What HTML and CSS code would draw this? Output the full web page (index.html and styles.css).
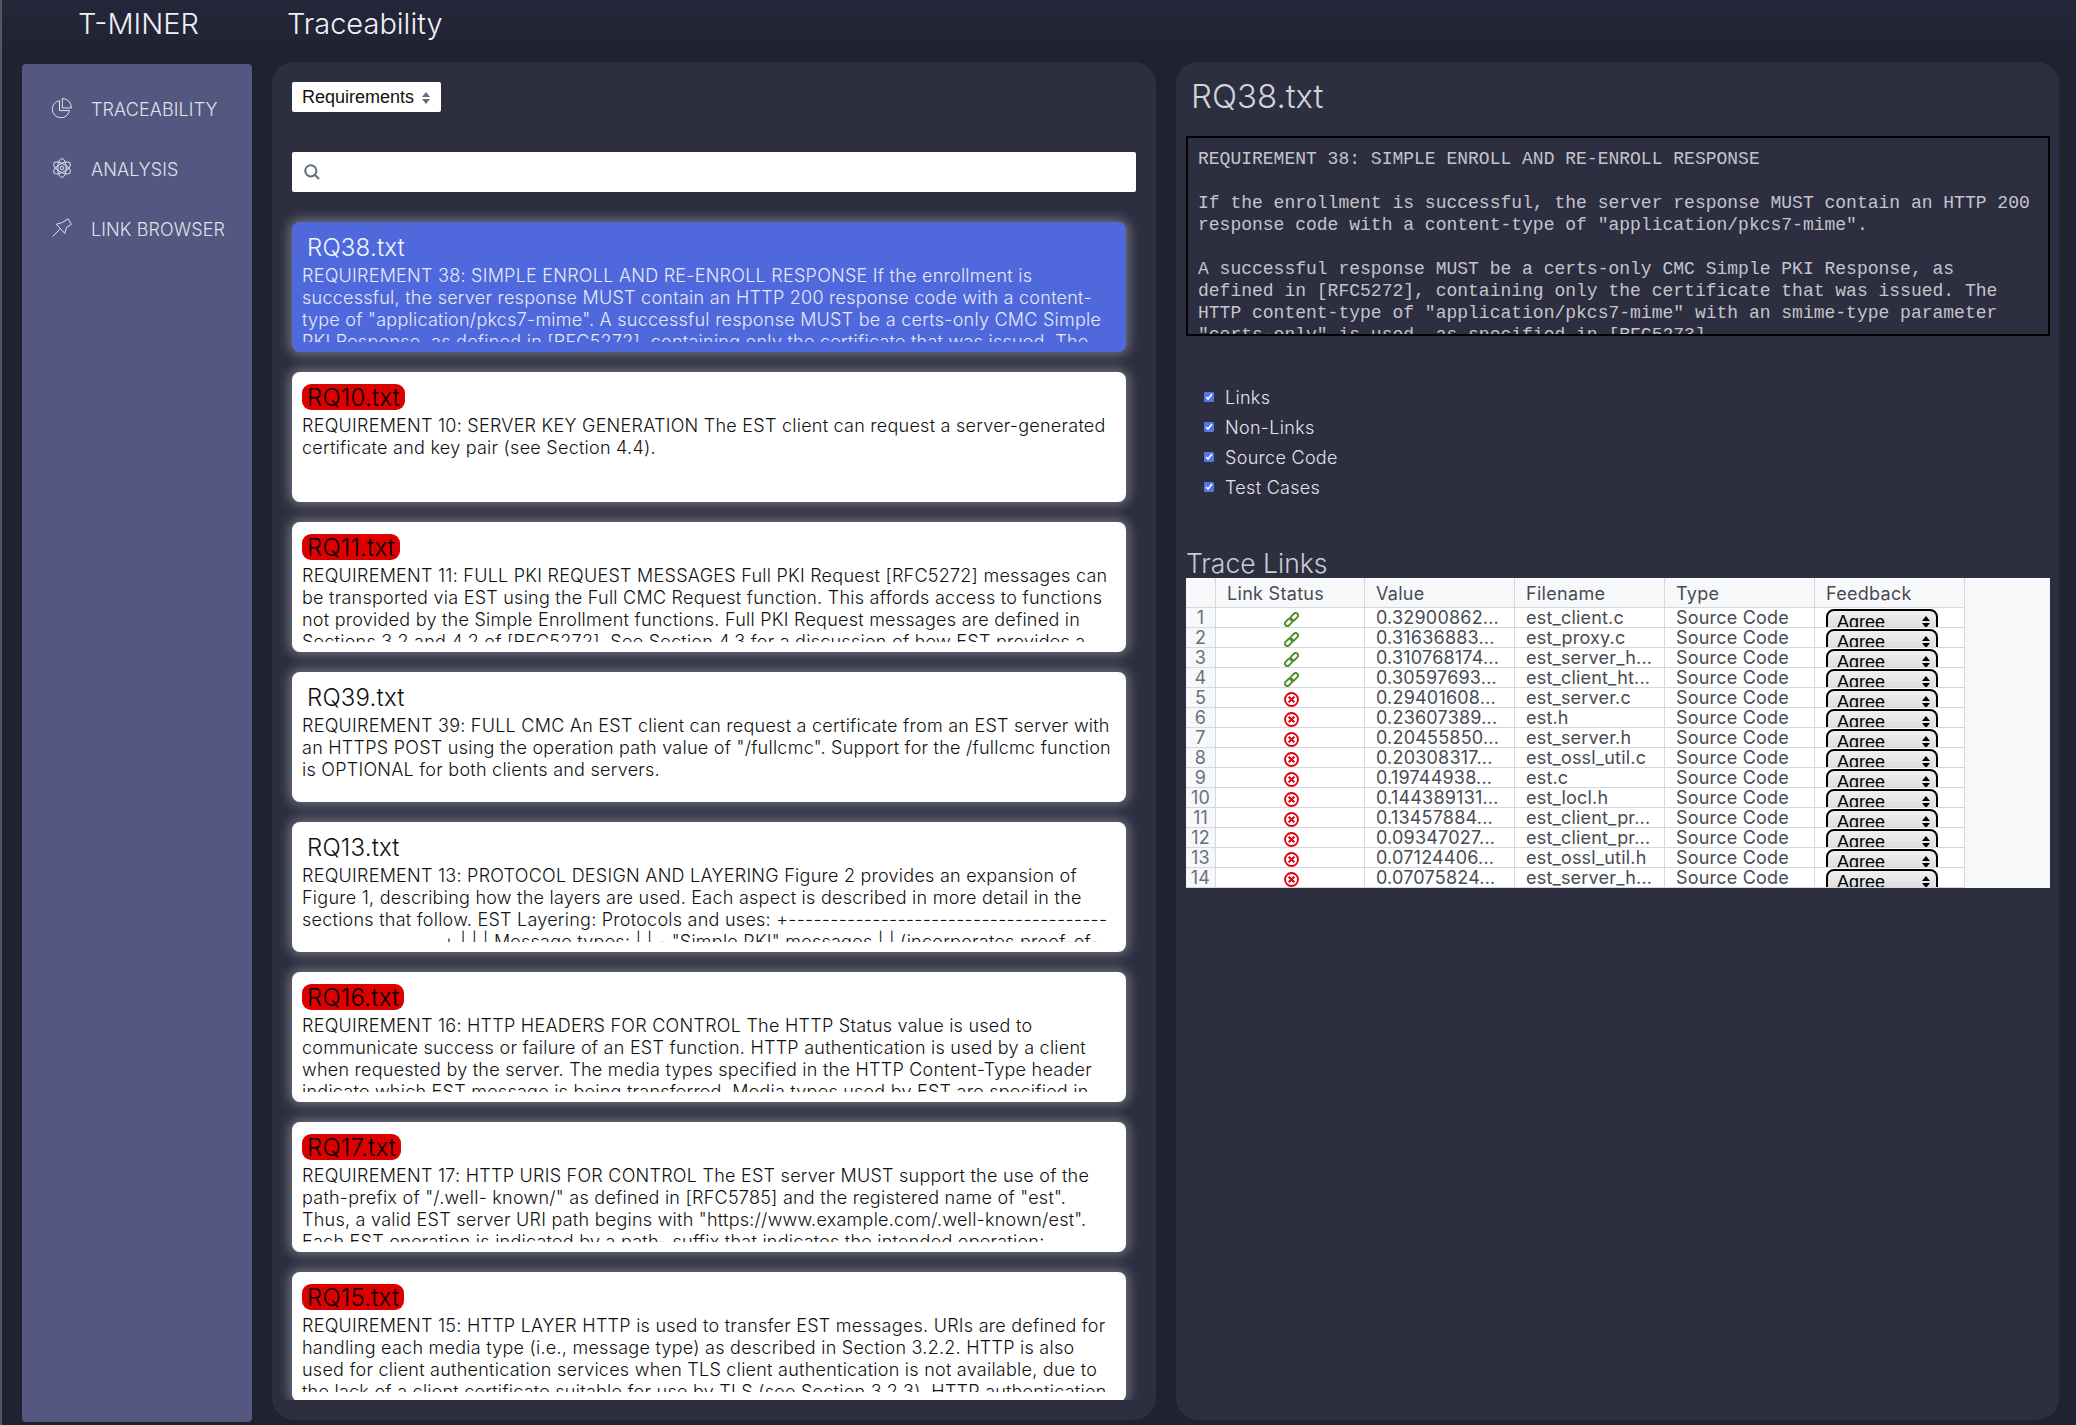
FILE: index.html
```html
<!DOCTYPE html>
<html lang="en">
  <head>
    <meta charset="UTF-8" />
    <title>T-MINER</title>
    <link rel="stylesheet" href="styles.css">
  </head>
  <body>
    <svg class="defs" width="0" height="0">
      <symbol id="icon-link" viewBox="0 0 16 16">
        <rect x="6.2" y="2.6" width="9.4" height="5.2" rx="2.6" transform="rotate(-45 10.9 5.2)" fill="none" stroke="currentColor" stroke-width="2"/>
        <rect x="0.4" y="8.2" width="9.4" height="5.2" rx="2.6" transform="rotate(-45 5.1 10.8)" fill="none" stroke="currentColor" stroke-width="2"/>
      </symbol>
      <symbol id="icon-nolink" viewBox="0 0 16 16">
        <circle cx="8" cy="8" r="6.9" fill="none" stroke="currentColor" stroke-width="2"/>
        <path d="M5 5l6 6M11 5l-6 6" fill="none" stroke="currentColor" stroke-width="2.2"/>
      </symbol>
    </svg>

    <header class="topbar">
      <div class="brand">T-MINER</div>
      <div class="page-title">Traceability</div>
    </header>

    <div class="content">
      <nav class="sidebar">
        <a class="nav-item">
          <svg class="nav-icon" viewBox="0 0 20 20">
            <path d="M10.3.5A9 9 0 0 1 19.3 10H10.3Z"/>
            <path d="M7.5 2.7A8.6 8.6 0 1 0 17.4 12.6H7.5Z"/>
          </svg>
          TRACEABILITY
        </a>
        <a class="nav-item">
          <svg class="nav-icon" viewBox="0 0 20 20">
            <ellipse cx="10" cy="10" rx="4.2" ry="9.4"/>
            <ellipse cx="10" cy="10" rx="4.2" ry="9.4" transform="rotate(60 10 10)"/>
            <ellipse cx="10" cy="10" rx="4.2" ry="9.4" transform="rotate(120 10 10)"/>
            <circle cx="10" cy="10" r="1.8"/>
          </svg>
          ANALYSIS
        </a>
        <a class="nav-item">
          <svg class="nav-icon" viewBox="0 0 20 20">
            <path d="M16 .8L19.4 6.4L14.6 9.2L12.8 15.4L4.4 6.2L10.6 4.4Z"/>
            <path d="M8.4 10.6L.6 18.6"/>
          </svg>
          LINK BROWSER
        </a>
      </nav>

      <main class="panel list-panel">
        <div class="select-wrap">
          <select class="type-select">
            <option>Requirements</option>
            <option>Source Code</option>
            <option>Test Cases</option>
          </select>
        </div>

        <div class="search">
          <svg class="search-icon" viewBox="0 0 16 16">
            <circle cx="6.8" cy="6.8" r="5.6"/>
            <path d="M10.8 10.8l4.2 4.2"/>
          </svg>
          <input type="text" />
        </div>

        <div class="card-list">
          <div class="card selected">
            <div class="card-title"><span>RQ38.txt</span></div>
            <div class="card-body">REQUIREMENT 38: SIMPLE ENROLL AND RE-ENROLL RESPONSE If the enrollment is successful, the server response MUST contain an HTTP 200 response code with a content-type of "application/pkcs7-mime". A successful response MUST be a certs-only CMC Simple PKI Response, as defined in [RFC5272], containing only the certificate that was issued. The</div>
          </div>
          <div class="card">
            <div class="card-title"><span class="no-link">RQ10.txt</span></div>
            <div class="card-body">REQUIREMENT 10: SERVER KEY GENERATION The EST client can request a server-generated certificate and key pair (see Section 4.4).</div>
          </div>
          <div class="card">
            <div class="card-title"><span class="no-link">RQ11.txt</span></div>
            <div class="card-body">REQUIREMENT 11: FULL PKI REQUEST MESSAGES Full PKI Request [RFC5272] messages can be transported via EST using the Full CMC Request function. This affords access to functions not provided by the Simple Enrollment functions. Full PKI Request messages are defined in Sections 3.2 and 4.2 of [RFC5272]. See Section 4.3 for a discussion of how EST provides a</div>
          </div>
          <div class="card">
            <div class="card-title"><span>RQ39.txt</span></div>
            <div class="card-body">REQUIREMENT 39: FULL CMC An EST client can request a certificate from an EST server with an HTTPS POST using the operation path value of "/fullcmc". Support for the /fullcmc function is OPTIONAL for both clients and servers.</div>
          </div>
          <div class="card">
            <div class="card-title"><span>RQ13.txt</span></div>
            <div class="card-body">REQUIREMENT 13: PROTOCOL DESIGN AND LAYERING Figure 2 provides an expansion of Figure 1, describing how the layers are used. Each aspect is described in more detail in the sections that follow. EST Layering: Protocols and uses: +--------------------------------------<br><span class="card-indent"></span>+ | | | Message types: | | - "Simple PKI" messages | | (incorporates proof-of-</div>
          </div>
          <div class="card">
            <div class="card-title"><span class="no-link">RQ16.txt</span></div>
            <div class="card-body">REQUIREMENT 16: HTTP HEADERS FOR CONTROL The HTTP Status value is used to communicate success or failure of an EST function. HTTP authentication is used by a client when requested by the server. The media types specified in the HTTP Content-Type header indicate which EST message is being transferred. Media types used by EST are specified in</div>
          </div>
          <div class="card">
            <div class="card-title"><span class="no-link">RQ17.txt</span></div>
            <div class="card-body">REQUIREMENT 17: HTTP URIS FOR CONTROL The EST server MUST support the use of the path-prefix of "/.well- known/" as defined in [RFC5785] and the registered name of "est". Thus, a valid EST server URI path begins with "https://www.example.com/.well-known/est". Each EST operation is indicated by a path- suffix that indicates the intended operation:</div>
          </div>
          <div class="card">
            <div class="card-title"><span class="no-link">RQ15.txt</span></div>
            <div class="card-body">REQUIREMENT 15: HTTP LAYER HTTP is used to transfer EST messages. URIs are defined for handling each media type (i.e., message type) as described in Section 3.2.2. HTTP is also used for client authentication services when TLS client authentication is not available, due to the lack of a client certificate suitable for use by TLS (see Section 3.2.3). HTTP authentication</div>
          </div>
        </div>
      </main>

      <section class="panel detail-panel">
        <h2 class="detail-title">RQ38.txt</h2>
        <pre class="source-box">REQUIREMENT 38: SIMPLE ENROLL AND RE-ENROLL RESPONSE

If the enrollment is successful, the server response MUST contain an HTTP 200
response code with a content-type of "application/pkcs7-mime".

A successful response MUST be a certs-only CMC Simple PKI Response, as
defined in [RFC5272], containing only the certificate that was issued. The
HTTP content-type of "application/pkcs7-mime" with an smime-type parameter
"certs-only" is used, as specified in [RFC5273].</pre>

        <div class="filters">
          <label class="filter"><input type="checkbox" checked /> Links</label>
          <label class="filter"><input type="checkbox" checked /> Non-Links</label>
          <label class="filter"><input type="checkbox" checked /> Source Code</label>
          <label class="filter"><input type="checkbox" checked /> Test Cases</label>
        </div>

        <h3 class="links-title">Trace Links</h3>
        <div class="table-wrap">
          <table class="links-table">
            <thead>
              <tr><th class="row-no"></th><th class="status-col">Link Status</th><th>Value</th><th>Filename</th><th>Type</th><th>Feedback</th></tr>
            </thead>
            <tbody>
              <tr><td class="row-no">1</td><td class="status"><svg class="link-ok"><use href="#icon-link"/></svg></td><td>0.32900862...</td><td>est_client.c</td><td>Source Code</td><td><div class="feedback"><select><option>Agree</option><option>Disagree</option></select></div></td></tr>
              <tr><td class="row-no">2</td><td class="status"><svg class="link-ok"><use href="#icon-link"/></svg></td><td>0.31636883...</td><td>est_proxy.c</td><td>Source Code</td><td><div class="feedback"><select><option>Agree</option><option>Disagree</option></select></div></td></tr>
              <tr><td class="row-no">3</td><td class="status"><svg class="link-ok"><use href="#icon-link"/></svg></td><td>0.310768174...</td><td>est_server_h...</td><td>Source Code</td><td><div class="feedback"><select><option>Agree</option><option>Disagree</option></select></div></td></tr>
              <tr><td class="row-no">4</td><td class="status"><svg class="link-ok"><use href="#icon-link"/></svg></td><td>0.30597693...</td><td>est_client_ht...</td><td>Source Code</td><td><div class="feedback"><select><option>Agree</option><option>Disagree</option></select></div></td></tr>
              <tr><td class="row-no">5</td><td class="status"><svg class="link-no"><use href="#icon-nolink"/></svg></td><td>0.29401608...</td><td>est_server.c</td><td>Source Code</td><td><div class="feedback"><select><option>Agree</option><option>Disagree</option></select></div></td></tr>
              <tr><td class="row-no">6</td><td class="status"><svg class="link-no"><use href="#icon-nolink"/></svg></td><td>0.23607389...</td><td>est.h</td><td>Source Code</td><td><div class="feedback"><select><option>Agree</option><option>Disagree</option></select></div></td></tr>
              <tr><td class="row-no">7</td><td class="status"><svg class="link-no"><use href="#icon-nolink"/></svg></td><td>0.20455850...</td><td>est_server.h</td><td>Source Code</td><td><div class="feedback"><select><option>Agree</option><option>Disagree</option></select></div></td></tr>
              <tr><td class="row-no">8</td><td class="status"><svg class="link-no"><use href="#icon-nolink"/></svg></td><td>0.20308317...</td><td>est_ossl_util.c</td><td>Source Code</td><td><div class="feedback"><select><option>Agree</option><option>Disagree</option></select></div></td></tr>
              <tr><td class="row-no">9</td><td class="status"><svg class="link-no"><use href="#icon-nolink"/></svg></td><td>0.19744938...</td><td>est.c</td><td>Source Code</td><td><div class="feedback"><select><option>Agree</option><option>Disagree</option></select></div></td></tr>
              <tr><td class="row-no">10</td><td class="status"><svg class="link-no"><use href="#icon-nolink"/></svg></td><td>0.144389131...</td><td>est_locl.h</td><td>Source Code</td><td><div class="feedback"><select><option>Agree</option><option>Disagree</option></select></div></td></tr>
              <tr><td class="row-no">11</td><td class="status"><svg class="link-no"><use href="#icon-nolink"/></svg></td><td>0.13457884...</td><td>est_client_pr...</td><td>Source Code</td><td><div class="feedback"><select><option>Agree</option><option>Disagree</option></select></div></td></tr>
              <tr><td class="row-no">12</td><td class="status"><svg class="link-no"><use href="#icon-nolink"/></svg></td><td>0.09347027...</td><td>est_client_pr...</td><td>Source Code</td><td><div class="feedback"><select><option>Agree</option><option>Disagree</option></select></div></td></tr>
              <tr><td class="row-no">13</td><td class="status"><svg class="link-no"><use href="#icon-nolink"/></svg></td><td>0.07124406...</td><td>est_ossl_util.h</td><td>Source Code</td><td><div class="feedback"><select><option>Agree</option><option>Disagree</option></select></div></td></tr>
              <tr><td class="row-no">14</td><td class="status"><svg class="link-no"><use href="#icon-nolink"/></svg></td><td>0.07075824...</td><td>est_server_h...</td><td>Source Code</td><td><div class="feedback"><select><option>Agree</option><option>Disagree</option></select></div></td></tr>
            </tbody>
          </table>
        </div>
      </section>
    </div>
  </body>
</html>
```

FILE: styles.css
```css
* {
  margin: 0;
  padding: 0;
  box-sizing: border-box;
}

html,
body {
  height: 100%;
  overflow: hidden;
}

body {
  font-family: Inter, "Liberation Sans", sans-serif;
  font-size: 18px;
  line-height: 22px;
  background-color: #21222f;
  border-left: 2px solid #55565e;
  display: flex;
  flex-direction: column;
}

.defs {
  position: absolute;
}

.topbar {
  height: 62px;
  flex: none;
  display: flex;
  color: #eef0f5;
  font-weight: 300;
  font-size: 29px;
  line-height: 48px;
  background: linear-gradient(#25263a, #23243300 100%);
}

.brand {
  width: 270px;
  padding-left: 76px;
}

.page-title {
  padding-left: 15px;
}

.content {
  flex: 1;
  display: flex;
  gap: 20px;
  padding: 0 17px 3px 20px;
  min-height: 0;
}

.sidebar {
  width: 230px;
  margin-top: 2px;
  flex: none;
  background-color: #54577f;
  border-radius: 4px;
  padding-top: 16px;
  display: flex;
  flex-direction: column;
}

.nav-item {
  height: 60px;
  display: flex;
  align-items: center;
  gap: 19px;
  padding-left: 30px;
  color: #dfe1ec;
  font-weight: 300;
  letter-spacing: 0.1px;
}

.nav-icon {
  width: 20px;
  height: 20px;
  margin-top: -4px;
  fill: none;
  stroke: #e0e2ee;
  stroke-width: 1;
}

.panel {
  flex: none;
  background-color: #2d2e40;
  border-radius: 22px;
  margin-bottom: 2px;
}

.list-panel {
  width: 884px;
  display: flex;
  flex-direction: column;
  padding: 20px 20px 20px;
}

.select-wrap {
  width: 148.5px;
  height: 30px;
  flex: none;
  position: relative;
  background-color: #fff;
  border-radius: 2px;
}

.select-wrap::before,
.select-wrap::after {
  content: "";
  position: absolute;
  left: 130px;
  border-left: 4px solid transparent;
  border-right: 4px solid transparent;
  pointer-events: none;
}

.select-wrap::before {
  top: 10px;
  border-bottom: 5px solid #5c7080;
}

.select-wrap::after {
  top: 17px;
  border-top: 5px solid #5c7080;
}

.type-select {
  appearance: none;
  width: 100%;
  height: 100%;
  border: none;
  background: none;
  padding-left: 10px;
  font-family: "Liberation Sans", sans-serif;
  font-size: 18px;
  color: #111;
}

.search {
  height: 40px;
  flex: none;
  margin-top: 40px;
  display: flex;
  align-items: center;
  gap: 8px;
  background-color: #fff;
  border-radius: 2px;
  padding-left: 12px;
}

.search-icon {
  width: 16px;
  height: 16px;
  fill: none;
  stroke: #5c7080;
  stroke-width: 2;
}

.search input {
  flex: 1;
  border: none;
  outline: none;
  font-size: 18px;
}

.card-list {
  flex: 1;
  min-height: 0;
  margin: 10px -20px 0;
  padding: 20px 30px 0 20px;
  overflow: hidden;
  display: flex;
  flex-direction: column;
  gap: 20px;
}

.card {
  height: 130px;
  flex: none;
  background-color: #fff;
  color: #111;
  border-radius: 8px;
  padding: 12px 10px 0;
  box-shadow: 0 0 12px 3px rgba(255, 255, 255, 0.32);
  font-weight: 300;
  letter-spacing: 0.25px;
}

.card.selected {
  background-color: #4f69dc;
  color: #e6e9f8;
}

.card-title {
  height: 26px;
  font-size: 24px;
  line-height: 26px;
  letter-spacing: 0.2px;
  margin-bottom: 5px;
}

.card-title span {
  display: inline-block;
  height: 26px;
  padding: 1px 5px 0;
  color: #111;
}

.card.selected .card-title span {
  color: #f4f6ff;
}

.card-title .no-link {
  background-color: #dd0000;
  color: #000;
  border-radius: 9px;
}

.card-body {
  height: 77px;
  overflow: hidden;
}

.card-indent {
  display: inline-block;
  width: 141px;
}

.detail-panel {
  width: 883px;
  padding: 0 9px 0 10px;
}

.detail-title {
  font-size: 33px;
  font-weight: 300;
  line-height: 40px;
  color: #d2d3da;
  padding: 14px 5px 0;
  height: 74px;
}

.source-box {
  height: 200px;
  border: 2px solid #000;
  padding: 10px 10px 0;
  overflow: hidden;
  font-family: "Liberation Mono", monospace;
  font-size: 18px;
  line-height: 22px;
  color: #c4c5cc;
  white-space: pre-wrap;
}

.filters {
  margin-top: 51px;
  padding-left: 18px;
  display: flex;
  flex-direction: column;
  gap: 8px;
}

.filter {
  display: flex;
  align-items: center;
  gap: 11px;
  color: #e3e4ea;
  font-weight: 300;
  letter-spacing: 0.3px;
}

.filter input {
  width: 10px;
  height: 10px;
  margin-top: -2px;
  accent-color: #4f75f0;
}

.links-title {
  margin-top: 49px;
  font-size: 26.5px;
  font-weight: 300;
  line-height: 30px;
  color: #c9cad2;
  height: 30px;
}

.table-wrap {
  height: 310px;
  background-color: #f7f8fa;
}

.links-table {
  width: 779px;
  table-layout: fixed;
  border-collapse: separate;
  border-spacing: 0;
  font-size: 18px;
  line-height: 19px;
  color: #474b53;
  background-color: #fff;
}

.links-table th {
  width: 150px;
  height: 30px;
  font-weight: 400;
  text-align: left;
  padding: 2px 0 0 11px;
  background-color: #f7f8fa;
  border-right: 1px solid #d5d8dd;
  border-bottom: 1px solid #d5d8dd;
  letter-spacing: 0.3px;
}

.links-table th.status-col {
  width: 149px;
}

.links-table td {
  height: 20px;
  padding: 0 0 0 11px;
  border-right: 1px solid #d5d8dd;
  border-bottom: 1px solid #d5d8dd;
  white-space: nowrap;
  overflow: hidden;
  letter-spacing: 0.2px;
}

.links-table th.row-no,
.links-table td.row-no {
  width: 30px;
  padding: 0;
  text-align: center;
  background-color: #f7f8fa;
  color: #6c7078;
}

.links-table td.status {
  padding: 0 0 0 2px;
  text-align: center;
}

.status svg {
  display: block;
  width: 15px;
  height: 15px;
  margin: 4px auto 0;
}

.link-ok {
  color: #4f8f2a;
}

.link-no {
  color: #e0000f;
}

.feedback {
  height: 18px;
  width: 112px;
  margin-top: 1px;
  position: relative;
  overflow: hidden;
}

.feedback select {
  appearance: none;
  display: block;
  width: 112px;
  height: 26px;
  border: 2px solid #000;
  border-radius: 8px;
  padding-left: 9px;
  background: linear-gradient(#f0f0f0, #d8d8d8);
  font-family: "Liberation Sans", sans-serif;
  font-size: 18px;
  color: #000;
}

.feedback::before,
.feedback::after {
  content: "";
  position: absolute;
  left: 96px;
  border-left: 4px solid transparent;
  border-right: 4px solid transparent;
  z-index: 1;
}

.feedback::before {
  top: 7px;
  border-bottom: 5px solid #000;
}

.feedback::after {
  top: 14px;
  border-top: 5px solid #000;
}
```
